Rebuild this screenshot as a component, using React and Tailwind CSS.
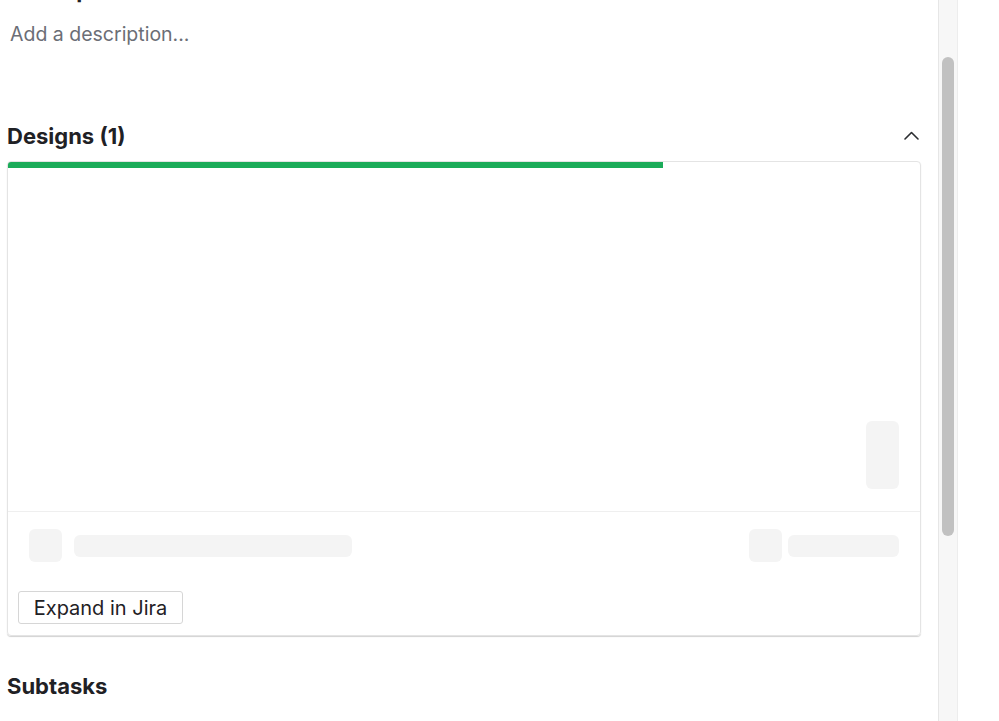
import React from "react";

const Skel = ({ className }) => <div className={`bg-[#f4f4f4] rounded-[6px] ${className}`} />;

const ChevronUp = () => (
    <svg width="15" height="14" viewBox="0 0 15 14" fill="none">
        <path d="M1 10L7.5 3.5L14 10" stroke="#2b2d31" strokeWidth="1.6" strokeLinecap="round" strokeLinejoin="round" />
    </svg>
);

const App = () => {
    return (
        <div className="h-[721px] w-[999px] overflow-hidden bg-white flex font-['Inter','Liberation_Sans',sans-serif]">
            <div className="w-[938px] shrink-0 pl-[7px] pr-[17px]">
                <div className="-mt-[24px] h-[28px] leading-[28px] text-[22px] font-bold text-[#1f2125]">
                    Description
                </div>
                <div className="mt-[16px] pl-[3px] h-[28px] leading-[28px] text-[19.5px] text-[#6b6e76]">
                    Add a description...
                </div>

                <div className="mt-[74px] h-[28px] flex items-center justify-between">
                    <h2 className="text-[22px] leading-[28px] font-bold text-[#1f2125]">Designs (1)</h2>
                    <div className="pr-[2px]">
                        <ChevronUp />
                    </div>
                </div>

                <div className="mt-[11px] h-[475px] border border-[#e4e4e4] rounded-[4px] shadow-[0_1px_1px_rgba(0,0,0,0.18)] overflow-hidden flex flex-col">
                    <div className="h-[6px] w-[655px] bg-[#1bab59] shrink-0" />
                    <div className="h-[343px] shrink-0 flex items-end justify-end pr-[21px] pb-[22px]">
                        <Skel className="w-[33px] h-[68px]" />
                    </div>
                    <div className="border-t border-[#efefef] px-[21px] pt-[17px] flex items-center justify-between">
                        <div className="flex items-center gap-[12px]">
                            <Skel className="w-[33px] h-[33px]" />
                            <Skel className="w-[278px] h-[22px]" />
                        </div>
                        <div className="flex items-center gap-[6px]">
                            <Skel className="w-[33px] h-[33px]" />
                            <Skel className="w-[111px] h-[22px]" />
                        </div>
                    </div>
                    <div className="mt-[29px] ml-[10px]">
                        <button className="h-[33px] w-[165px] border border-[#d6d6d6] rounded-[3px] text-[20px] text-[#1f2125] bg-white">
                            Expand in Jira
                        </button>
                    </div>
                </div>

                <h2 className="mt-[36px] text-[22px] leading-[28px] font-bold text-[#1f2125]">Subtasks</h2>
            </div>

            <div className="w-[20px] shrink-0 h-full bg-[#f7f7f7] border-l border-[#e6e6e6] border-r border-r-[#ededed]">
                <div className="mt-[57px] mx-auto w-[12px] h-[479px] rounded-full bg-[#c1c1c1]" />
            </div>
            <div className="flex-1 bg-white" />
        </div>
    );
};

export default App;
